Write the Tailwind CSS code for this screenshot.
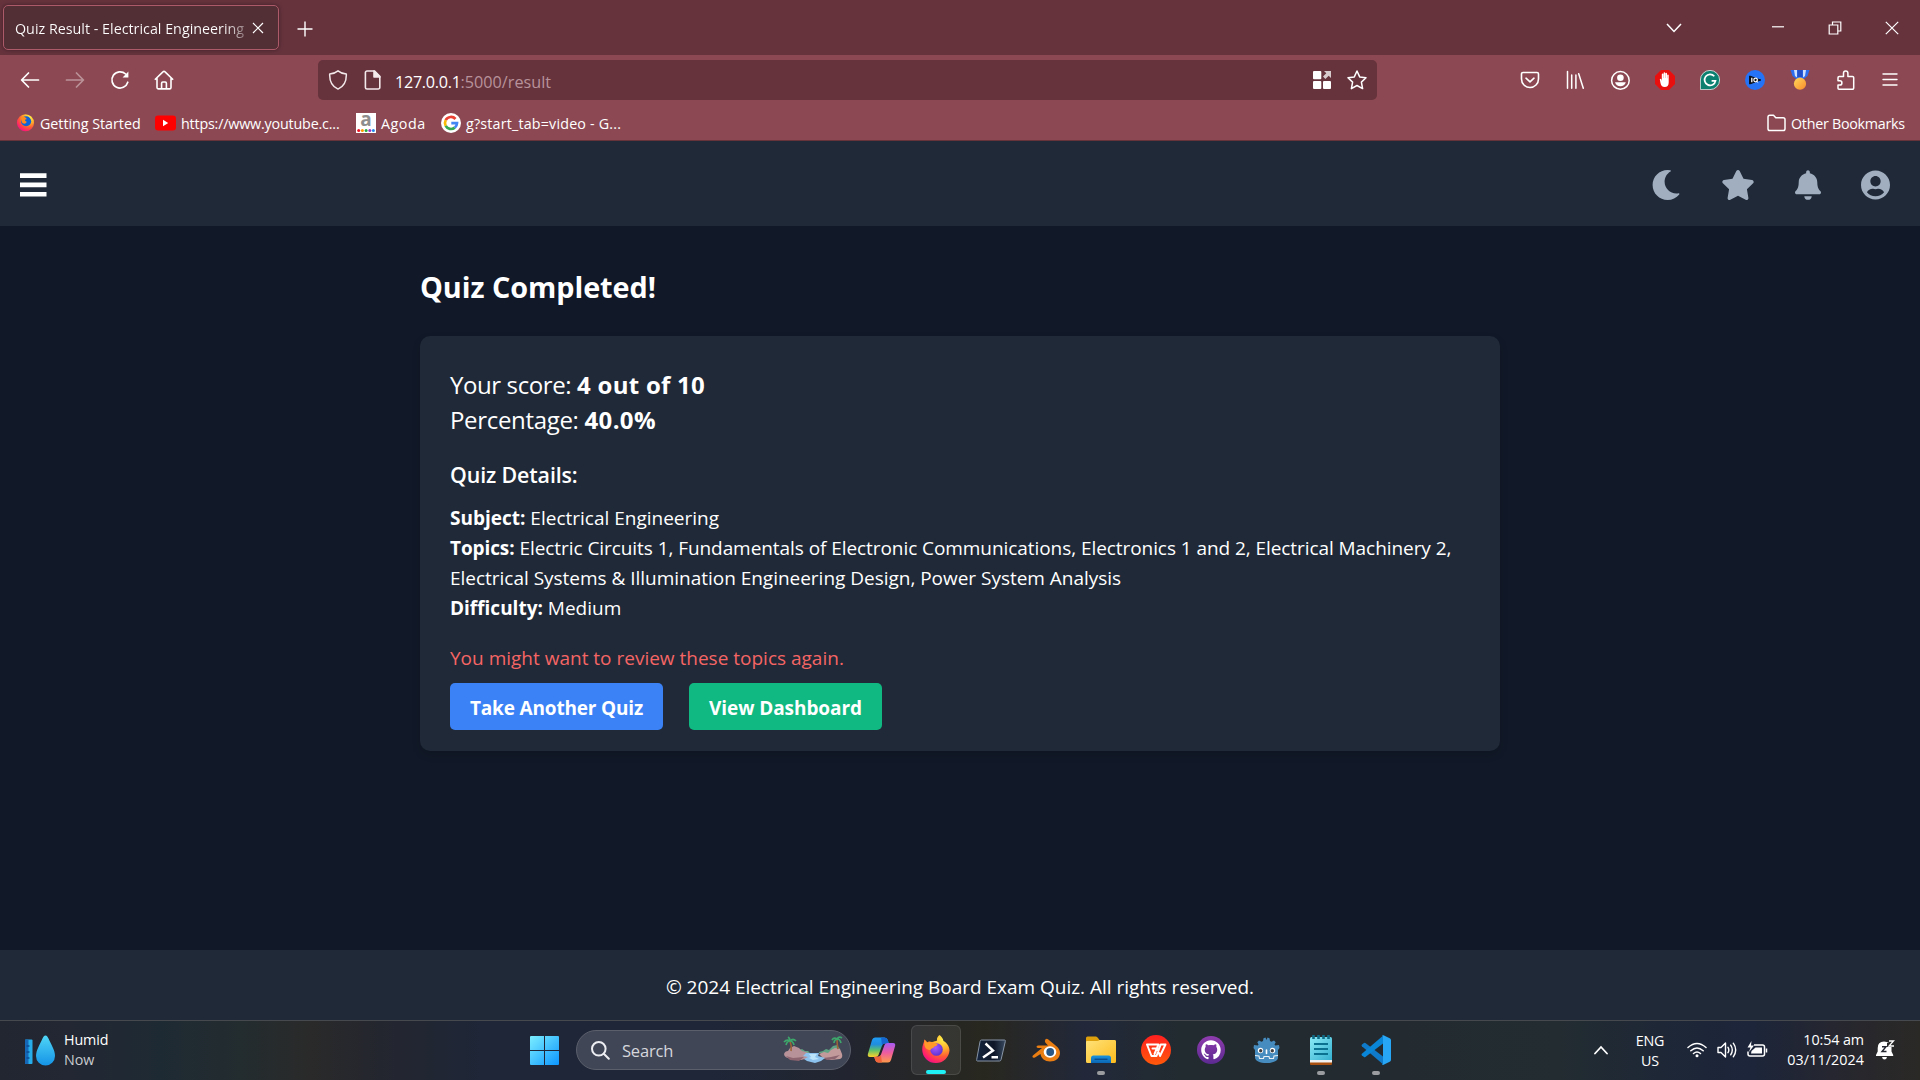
<!DOCTYPE html>
<html lang="en">
<head>
<meta charset="utf-8">
<title>Quiz Result - Electrical Engineering</title>
<script src="https://cdn.jsdelivr.net/npm/@tailwindcss/browser@4"></script>
</head>
<body class="flex h-[1080px] w-[1920px] flex-col overflow-hidden bg-[#111827] font-['Open_Sans','Noto_Sans',sans-serif] text-white">

<!-- Shared gradients and symbols -->
<svg class="absolute h-0 w-0" aria-hidden="true">
  <defs>
    <radialGradient id="fox" cx=".75" cy=".15" r="1"><stop offset="0" stop-color="#fff14a"/><stop offset=".35" stop-color="#ffb02b"/><stop offset=".62" stop-color="#ff5a36"/><stop offset=".85" stop-color="#ff1e6e"/><stop offset="1" stop-color="#d9128f"/></radialGradient>
    <radialGradient id="globe" cx=".4" cy=".35" r=".7"><stop offset="0" stop-color="#a45bff"/><stop offset="1" stop-color="#5b2fd0"/></radialGradient>
    <linearGradient id="win" x2="1" y2="1"><stop stop-color="#7ceeff"/><stop offset="1" stop-color="#0c96ff"/></linearGradient>
    <linearGradient id="drop" x2="0" y2="1"><stop stop-color="#4fd6f7"/><stop offset="1" stop-color="#1593e6"/></linearGradient>
    <linearGradient id="cpA" x2="0" y2="1"><stop stop-color="#1f9df5"/><stop offset=".35" stop-color="#1f8de0"/><stop offset=".65" stop-color="#5cc16b"/><stop offset="1" stop-color="#ffd32a"/></linearGradient>
    <linearGradient id="cpB" x2="0" y2="1"><stop stop-color="#a55bf5"/><stop offset=".5" stop-color="#ee5c9e"/><stop offset="1" stop-color="#ff9a4a"/></linearGradient>
    <linearGradient id="ps" x2="1" y2="0"><stop stop-color="#16263f"/><stop offset=".6" stop-color="#0e1728"/><stop offset="1" stop-color="#3a4a60"/></linearGradient>
    <linearGradient id="fold" x2="1" y2="1"><stop stop-color="#ffe27a"/><stop offset="1" stop-color="#fdbc1c"/></linearGradient>
    <linearGradient id="foldb" x2="0" y2="1"><stop stop-color="#1b93dd"/><stop offset="1" stop-color="#0b66b5"/></linearGradient>
    <linearGradient id="wps" x2="0" y2="1"><stop stop-color="#ff1f1f"/><stop offset="1" stop-color="#ff5a0a"/></linearGradient>
    <linearGradient id="note" x2="1" y2="1"><stop stop-color="#8beaf6"/><stop offset="1" stop-color="#35b0d0"/></linearGradient>
    <linearGradient id="medal" x2="1" y2="1"><stop stop-color="#ffd95a"/><stop offset="1" stop-color="#f98a2b"/></linearGradient>
    <linearGradient id="git" x2="0" y2="1"><stop stop-color="#8f3cae"/><stop offset="1" stop-color="#5c2a91"/></linearGradient>
  </defs>
</svg>

<!-- Tab strip -->
<div class="flex h-[55px] shrink-0 items-center bg-[#66333d] pl-[3px]">
  <div class="flex h-[45px] w-[276px] items-center rounded-[5px] border border-[#ac5a6a] bg-[#522e35] pl-[11px] shadow-[0_0_4px_rgba(0,0,0,0.4)]">
    <span class="w-[232px] bg-linear-to-r from-white from-90% to-white/30 bg-clip-text pt-[2px] text-[14.3px] whitespace-nowrap text-transparent">Quiz Result - Electrical Engineering</span>
    <svg class="ml-[5px] h-[12px] w-[12px]" viewBox="0 0 12 12" fill="none" stroke="#fff" stroke-width="1.2"><path d="M1 1l10 10M11 1L1 11"/></svg>
  </div>
  <svg class="mt-[2px] ml-[18px] h-[16px] w-[16px]" viewBox="0 0 16 16" fill="none" stroke="#fff" stroke-width="1.4"><path d="M8 0.5v15M0.5 8h15"/></svg>
  <div class="ml-auto flex items-center">
    <svg class="h-[16px] w-[16px]" viewBox="0 0 16 16" fill="none" stroke="#fff" stroke-width="1.5"><path d="M1 4l7 7.5L15 4"/></svg>
    <svg class="ml-[89px] h-[14px] w-[14px]" viewBox="0 0 14 14" stroke="#fff" stroke-width="1.2"><path d="M1 5.8h12"/></svg>
    <svg class="ml-[43px] h-[14px] w-[14px]" viewBox="0 0 14 14" fill="none" stroke="#fff" stroke-width="1.2"><path d="M1.2 4h8.6v9H1.2zM4.5 4V1h8.3v9H10"/></svg>
    <svg class="mr-[21px] ml-[43px] h-[14px] w-[14px]" viewBox="0 0 14 14" fill="none" stroke="#fff" stroke-width="1.2"><path d="M.8.8l12.4 12.4M13.2.8L.8 13.2"/></svg>
  </div>
</div>

<!-- Navigation toolbar -->
<div class="flex h-[50px] shrink-0 items-center bg-[#8c4953] text-white">
  <div class="flex w-[318px] items-center gap-[25px] pl-[20px]">
    <svg class="h-[20px] w-[20px]" viewBox="0 0 20 20" fill="none" stroke="#fff" stroke-width="1.7" stroke-linecap="round" stroke-linejoin="round"><path d="M18.5 10H1.8M8.5 3L1.6 10l6.900 7"/></svg>
    <svg class="h-[20px] w-[20px] opacity-40" viewBox="0 0 20 20" fill="none" stroke="#fff" stroke-width="1.7" stroke-linecap="round" stroke-linejoin="round"><path d="M1.500 10h16.700M11.500 3l6.900 7-6.900 7"/></svg>
    <svg class="h-[20px] w-[20px]" viewBox="0 0 20 20" fill="none" stroke="#fff" stroke-width="1.7" stroke-linecap="round"><path d="M17.800 12.200A8.100 8.100 0 1 1 15.600 4"/><path d="M18.400 1.600v5.800h-5.800z" fill="#fff" stroke="none"/></svg>
    <svg class="-ml-px h-[20px] w-[20px]" viewBox="0 0 20 20" fill="none" stroke="#fff" stroke-width="1.600" stroke-linejoin="round" stroke-linecap="round"><path d="M1.300 9.300L9.200 1.600a1.100 1.100 0 0 1 1.600 0l7.900 7.700M3 8.200v9.300a1.400 1.400 0 0 0 1.400 1.400h11.200a1.400 1.400 0 0 0 1.400-1.400V8.200M7.600 18.600v-5.400c0-.7.5-1.200 1.200-1.200h2.400c.7 0 1.200.5 1.200 1.200v5.400"/></svg>
  </div>
  <div class="flex h-[40px] w-[1059px] items-center rounded-[5px] bg-[#66333d] pr-[10px] pl-[10px]">
    <svg class="h-[20px] w-[20px]" viewBox="0 0 20 20" fill="none" stroke="#f3e8ea" stroke-width="1.500" stroke-linejoin="round"><path d="M10 .9c2.400 2 5 2.900 8.300 3.200.3 7.300-2.300 12.300-8.300 15C4 16.400 1.400 11.400 1.700 4.100 5 3.800 7.600 2.900 10 .9z"/></svg>
    <svg class="ml-[15px] h-[20px] w-[20px]" viewBox="0 0 20 20" fill="none" stroke="#f3e8ea" stroke-width="1.600" stroke-linejoin="round"><path d="M4 1h7.600l5.200 5.200v11.200A1.600 1.600 0 0 1 15.200 19H4a1.600 1.600 0 0 1-1.600-1.600V2.600A1.600 1.600 0 0 1 4 1z"/><path d="M11 1v6h6z" fill="#f3e8ea"/></svg>
    <span class="ml-[12px] pt-[4px] text-[16.200px] leading-[22px] text-[#b8929a]"><span class="tracking-[-0.3px] text-white">127.0.0.1</span>:5000/result</span>
    <svg class="ml-auto h-[20px] w-[20px]" viewBox="0 0 20 20" fill="#fff"><rect x="1" y="1" width="8.300" height="8.300" rx="1"/><rect x="1" y="11" width="8.300" height="8" rx="1"/><rect x="11" y="11" width="8" height="8" rx="1"/><path d="M12 1h7v7l-2.300-2.300-3.300 3.300-2.400-2.400L14.300 3.300z" opacity=".75"/></svg>
    <svg class="ml-[15px] h-[20px] w-[20px]" viewBox="0 0 20 20" fill="none" stroke="#fff" stroke-width="1.500" stroke-linejoin="round"><path d="M10 1l2.700 5.900 6.300.8-4.600 4.400 1.200 6.500L10 15.500l-5.600 3.100 1.200-6.500L1 7.700l6.300-.8z"/></svg>
  </div>
  <div class="ml-auto flex items-center gap-[25px] pr-[20px]">
    <svg class="h-[20px] w-[20px]" viewBox="0 0 20 20" fill="none" stroke="#fff" stroke-width="1.600" stroke-linecap="round" stroke-linejoin="round"><path d="M3 2.500h14a1.500 1.500 0 0 1 1.500 1.500v5a8.500 8.500 0 0 1-17 0V4A1.500 1.500 0 0 1 3 2.500z"/><path d="M6 8.200l4 3.700 4-3.700"/></svg>
    <svg class="h-[20px] w-[20px]" viewBox="0 0 20 20" fill="none" stroke="#fff" stroke-width="1.500" stroke-linecap="round"><path d="M2.500 1.500v16.700M6.700 5v13.200M10.900 5v13.200M13.700 3.800l4.600 14.400"/></svg>
    <svg class="h-[20px] w-[20px]" viewBox="0 0 20 20"><circle cx="10.400" cy="10.400" r="8.800" fill="none" stroke="#fff" stroke-width="1.500"/><circle cx="10.400" cy="7.700" r="3.300" fill="#fff"/><path d="M5 12.200h10.800c-.8 2.600-2.800 4-5.400 4s-4.600-1.400-5.400-4z" fill="#fff"/></svg>
    <svg class="h-[20px] w-[20px]" viewBox="0 0 20 20"><path d="M6 0h8l6 6v8l-6 6H6l-6-6V6z" fill="#e90f0f"/><path d="M4.800 9.300c0-.9 1.300-.9 1.500 0l.5 1.800V4.300c0-1 1.500-1 1.600 0V8h.2V3c0-1 1.600-1 1.600 0v5h.2V3.600c0-1 1.600-1 1.600 0v4.700h.2V5.200c0-1 1.500-1 1.500 0v7.300c0 3-1.500 4.500-4 4.500-2.600 0-3.700-1.600-4.200-4z" fill="#fff"/></svg>
    <svg class="h-[20px] w-[20px]" viewBox="0 0 20 20"><path d="M10 .4a9.600 9.600 0 1 1 0 19.200H.4V10A9.600 9.600 0 0 1 10 .4z" fill="#0b8070" stroke="#cfe3df" stroke-width=".9"/><path d="M14.300 6.300A5.500 5.500 0 1 0 15.500 10.800H11.600" fill="none" stroke="#fff" stroke-width="1.700"/></svg>
    <svg class="h-[20px] w-[20px]" viewBox="0 0 20 20"><circle cx="10" cy="10" r="10" fill="#2472f5"/><path d="M4.600 6l11.200 4-11.200 4z" fill="#0b1018" stroke="#0b1018"/><path d="M6.800 7.800v4.400" stroke="#fff" stroke-width="1.300"/><circle cx="10.600" cy="10" r="1.800" fill="none" stroke="#fff" stroke-width="1.200"/><path d="M11 10.800l2.200 1.700" stroke="#fff"/></svg>
    <svg class="h-[20px] w-[20px]" viewBox="0 0 20 20"><path d="M.5 0h19l-2 6-4.500 3.500H7L2.500 6z" fill="#2d6df0"/><path d="M4 0h3v7.500L5 6zM13 0h3l-1 6-2 1.500z" fill="#cfe0ff"/><path d="M7.500 0h5v7h-5z" fill="#2350c8"/><circle cx="10" cy="13.700" r="6.100" fill="url(#medal)"/></svg>
    <svg class="h-[20px] w-[20px]" viewBox="0 0 20 20" fill="none" stroke="#fff" stroke-width="1.500" stroke-linejoin="round"><path d="M4 19.200a1 1 0 0 1-1-1V15h1.800a2.100 2.100 0 0 0 0-4.200H3V7.700a1.200 1.200 0 0 1 1.200-1.200h4.300V3.200a2.200 2.200 0 0 1 4.400 0v3.300h4.600a1.200 1.200 0 0 1 1.200 1.200V18a1.200 1.200 0 0 1-1.200 1.200z"/></svg>
    <svg class="h-[20px] w-[20px]" viewBox="0 0 20 20" stroke="#fff" stroke-width="1.400" stroke-linecap="round"><path d="M3 4h14M3 9.500h14M3 15h14"/></svg>
  </div>
</div>

<!-- Bookmarks bar -->
<div class="flex h-[36px] shrink-0 items-center border-b border-[#66333b] bg-[#8c4953] pr-[15px] pl-[16px] text-[14.300px]">
  <svg class="h-[19px] w-[19px]" viewBox="0 0 30 30"><circle cx="15" cy="15.500" r="13.500" fill="url(#fox)"/><circle cx="16" cy="13" r="8" fill="#0f63d8"/><path d="M8 6c5-2 8 1 9 4-4 0-3 3 0 4-1 4-7 4-8 0-1-3-1-5-1-8z" fill="#ff8a1e"/></svg>
  <span class="ml-[5px] w-[100px] pt-[3px] tracking-[-0.030px] whitespace-nowrap">Getting Started</span>
  <svg class="ml-[15px] h-[16px] w-[21px]" viewBox="0 0 21 16"><rect width="21" height="15" y=".5" rx="3" fill="#f00"/><path d="M8 4.800v6.400L13.200 8z" fill="#fff"/></svg>
  <span class="ml-[5px] w-[159px] pt-[3px] tracking-[-0.18px] whitespace-nowrap">https://www.youtube.c...</span>
  <svg class="ml-[16px] h-[20px] w-[20px]" viewBox="0 0 20 20"><rect width="20" height="20" fill="#fff"/><text x="10" y="13" text-anchor="middle" font-family="Open Sans" font-weight="700" font-size="19" fill="#8e8e8e">a</text><circle cx="2.700" cy="17.400" r="1.500" fill="#e12"/><circle cx="6.400" cy="17.400" r="1.500" fill="#f90"/><circle cx="10.100" cy="17.400" r="1.500" fill="#2a4"/><circle cx="13.800" cy="17.400" r="1.500" fill="#93c"/><circle cx="17.400" cy="17.400" r="1.500" fill="#28e"/></svg>
  <span class="ml-[5px] w-[45px] pt-[3px] tracking-[0.5px] whitespace-nowrap">Agoda</span>
  <svg class="ml-[15px] h-[20px] w-[20px]" viewBox="0 0 20 20" fill="none" stroke-width="2.700"><circle cx="10" cy="10" r="10" fill="#fff"/><path d="M14.500 6A6 6 0 0 0 4.700 7.200" stroke="#ea4335"/><path d="M4.700 7.200a6 6 0 0 0 0 5.600" stroke="#fbbc05"/><path d="M4.700 12.800A6 6 0 0 0 13.800 14.600" stroke="#34a853"/><path d="M13.800 14.600A6 6 0 0 0 16 10.200H10.300" stroke="#4285f4"/></svg>
  <span class="ml-[5px] pt-[3px] tracking-[0.18px] whitespace-nowrap">g?start_tab=video - G...</span>
  <svg class="ml-auto h-[18px] w-[19px]" viewBox="0 0 19 18" fill="none" stroke="#fff" stroke-width="1.500" stroke-linejoin="round"><path d="M1 3a1.800 1.800 0 0 1 1.800-1.800h3.700l2.300 2.600h7.400A1.800 1.800 0 0 1 18 5.600v9.200a1.800 1.800 0 0 1-1.800 1.800H2.800A1.800 1.800 0 0 1 1 14.800z"/></svg>
  <span class="ml-[5px] w-[114px] pt-[3px] tracking-[-0.27px] whitespace-nowrap">Other Bookmarks</span>
</div>

<!-- Site header -->
<header class="flex h-[85px] shrink-0 items-center justify-between bg-[#1f2937] pt-[2px] pr-[30px] pl-5 text-[#a0aec0]">
  <svg class="h-[30px] w-[27px]" viewBox="0 0 27 30" fill="#fff"><path d="M0 3.200h26.500v4.700H0zM0 12.500h26.500v4.700H0zM0 21.900h26.500v4.700H0z"/></svg>
  <div class="flex items-center">
    <svg class="h-[30px] w-[30px]" viewBox="0 0 512 512" fill="currentColor"><path d="M283.211 512c78.962 0 151.079-35.925 198.857-94.792 7.068-8.708-.639-21.430-11.562-19.350-124.203 23.654-238.262-71.576-238.262-196.960 0-72.222 38.662-138.635 101.498-174.394 9.686-5.512 7.250-20.197-3.756-22.230A258.156 258.156 0 0 0 283.211 0c-141.309 0-256 114.511-256 256 0 141.309 114.511 256 256 256z"/></svg>
    <svg class="ml-[40px] h-[30px] w-[34px]" viewBox="0 0 576 512" fill="currentColor"><path d="M259.300 17.800L194 150.200 47.900 171.500c-26.200 3.800-36.700 36.100-17.700 54.600l105.700 103-25 145.500c-4.500 26.300 23.200 46 46.400 33.700L288 439.600l130.700 68.700c23.200 12.200 50.900-7.400 46.400-33.700l-25-145.500 105.700-103c19-18.500 8.500-50.800-17.700-54.600L382 150.200 316.700 17.800c-11.700-23.600-45.600-23.900-57.400 0z"/></svg>
    <svg class="ml-[40px] h-[30px] w-[26px]" viewBox="0 0 448 512" fill="currentColor"><path d="M224 512c35.320 0 63.970-28.650 63.970-64H160.030c0 35.350 28.650 64 63.970 64zm215.390-149.710c-19.320-20.760-55.470-51.990-55.470-154.290 0-77.700-54.480-139.900-127.940-155.160V32c0-17.670-14.320-32-31.980-32s-31.980 14.330-31.980 32v20.840C118.560 68.100 64.080 130.300 64.080 208c0 102.300-36.150 133.530-55.470 154.290-6 6.450-8.660 14.160-8.610 21.710.11 16.400 12.980 32 32.100 32h383.800c19.120 0 32-15.600 32.100-32 .05-7.550-2.610-15.270-8.610-21.710z"/></svg>
    <svg class="ml-[40px] h-[30px] w-[29px]" viewBox="0 0 496 512" fill="currentColor"><path d="M248 8C111 8 0 119 0 256s111 248 248 248 248-111 248-248S385 8 248 8zm0 96c48.600 0 88 39.400 88 88s-39.400 88-88 88-88-39.400-88-88 39.400-88 88-88zm0 344c-58.700 0-111.300-26.600-146.500-68.200 18.800-35.400 55.600-59.800 98.500-59.800 2.400 0 4.800.4 7.100 1.100 13 4.200 26.600 6.900 40.900 6.900 14.300 0 28-2.700 40.900-6.900 2.300-.7 4.700-1.100 7.100-1.100 42.900 0 79.700 24.400 98.500 59.800C359.300 421.400 306.700 448 248 448z"/></svg>
  </div>
</header>

<!-- Result -->
<main class="mx-auto w-[1080px] grow pt-[40px]">
  <h1 class="h-[70px] pt-px text-[28.800px] leading-[40px] font-bold tracking-[-0.050px]">Quiz Completed!</h1>
  <section class="h-[415px] rounded-[10px] bg-[#1f2937] p-[30px] text-[19px] leading-[30px] shadow-[0_4px_8px_rgba(0,0,0,0.12)]">
    <div class="pt-px text-[24px] leading-[35px]">
      <p><span class="tracking-[-0.400px]">Your score: </span><b class="tracking-[0.270px]">4 out of 10</b></p>
      <p><span class="tracking-[-0.320px]">Percentage: </span><b class="tracking-[0.350px]">40.0%</b></p>
    </div>
    <h2 class="mt-[20px] text-[21.400px] leading-[35px] font-semibold tracking-[-0.130px]">Quiz Details:</h2>
    <div class="mt-[11px]">
      <p><b>Subject:</b> Electrical Engineering</p>
      <p><b class="tracking-[-0.100px]">Topics:</b> <span class="tracking-[-0.065px]">Electric Circuits 1, Fundamentals of Electronic Communications, Electronics 1 and 2, Electrical Machinery 2,</span><br><span class="tracking-[-0.020px]">Electrical Systems &amp; Illumination Engineering Design, Power System Analysis</span></p>
      <p><b>Difficulty:</b> Medium</p>
    </div>
    <p class="mt-[20px] text-[#f56565]">You might want to review these topics again.</p>
    <div class="mt-[10px] flex gap-[26px] font-bold">
      <a class="flex h-[47px] w-[213px] items-center justify-center rounded-[5px] bg-[#3b82f6] pt-[3px] tracking-[-0.170px]">Take Another Quiz</a>
      <a class="flex h-[47px] w-[193px] items-center justify-center rounded-[5px] bg-[#10b981] pt-[3px] tracking-[-0.070px]">View Dashboard</a>
    </div>
  </section>
</main>

<footer class="flex h-[70px] shrink-0 items-center justify-center bg-[#1f2937] pt-[5px] text-[19px] tracking-[-0.020px]">© 2024 Electrical Engineering Board Exam Quiz. All rights reserved.</footer>

<!-- Taskbar -->
<div class="flex h-[60px] shrink-0 items-center border-t border-[#46494d] bg-[linear-gradient(90deg,#222631_0px,#222733_70px,#1e2a33_160px,#232c2f_240px,#2a2a2a_310px,#24262f_380px,#1e2637_480px,#1e2638_700px,#22252f_850px,#28271f_985px,#22283a_1085px,#222b30_1180px,#232b30_1400px,#222c31_1560px,#1e2736_1660px,#1c253a_1750px,#252630_1830px,#2b2926_1920px)] pb-px">
  <div class="flex w-[576px] items-center pl-[24px]">
    <svg class="h-[32px] w-[32px]" viewBox="0 0 32 32"><rect x="1" y="5.500" width="7.500" height="24.500" rx="1" fill="#27aeea"/><path d="M1 5.500h3.500v24.500H1z" fill="#1667b5"/><path d="M2.500 12h3M2.500 18h3M2.500 24h3" stroke="#0d4e96" stroke-width="1.500"/><path d="M21.500 1.500c1.500 0 2.300 1.500 3 3 3 6.500 6.500 12 6.500 17.500a9.500 9.500 0 0 1-19 0c0-5.500 3.500-11 6.500-17.500.7-1.500 1.500-3 3-3z" fill="url(#drop)"/></svg>
    <div class="ml-[8px] w-[100px] pb-px text-[14.300px] leading-[20px]">
      <div class="tracking-[-0.100px]">Humid</div>
      <div class="text-[#c9cbcf]">Now</div>
    </div>
    <svg class="ml-auto mr-[17px] h-[29px] w-[29px]" viewBox="0 0 29 29" fill="url(#win)"><path d="M1 0h13v14H0V1a1 1 0 0 1 1-1zM15 0h13a1 1 0 0 1 1 1v13H15zM0 15h14v14H1a1 1 0 0 1-1-1zM15 15h14v13a1 1 0 0 1-1 1H15z"/></svg>
  </div>
  <div class="flex h-[40px] w-[275px] items-center rounded-full border border-[#5b5f6c] bg-[#414656] pr-[7px] pl-[14px]">
    <svg class="h-[19px] w-[19px]" viewBox="0 0 19 19" fill="none" stroke="#eceef2" stroke-width="2" stroke-linecap="round"><circle cx="7.800" cy="7.800" r="6.800"/><path d="M12.800 12.800l5 5"/></svg>
    <span class="ml-[12px] pt-[2px] text-[16.500px] tracking-[-0.200px] text-[#d5d7dc]">Search</span>
    <svg class="ml-auto h-[28px] w-[60px]" viewBox="0 0 60 28"><path d="M12 15l2-3 2 2 3-1 3 2h3l3 3H12zM36 16l4-1 3-2 3 1 4-4 4-1 3 4v4H36z" fill="#5fa384"/><path d="M1 18q1-3 4-3l2-3 4-2 5 2 3 3 4 1 5 2-2 4-8 2-9-1q-8-1-8-5z" fill="#b79299"/><path d="M36 18l5-2 4 1 3-3 4-2 5 1 2 5q1 4-2 5l-9 1-8-2z" fill="#c39a9c"/><path d="M3 20l7 2 11-1-5 4-9-1zM40 22l8-1 9-2-5 4-8 1z" fill="#8d6570"/><path d="M23 17h13l-1 3 7 2-4 3-6 2-8-2-3-2 4-2-5-1z" fill="#8cc3ee"/><path d="M26 18h8l-2 3 4 2-6 1-4-2 2-1z" fill="#bce4fb"/><path d="M7 5q2 5 1 10M54 3q0 5 1 10" stroke="#9c6337" stroke-width="1.600" fill="none"/><path d="M7 5q-3-2-6 1M7 5q3-3 6 0M7 5q-3 0-4 4M7 5q3 0 4 4M7 5q0-3-2-4M54 3q-3-2-5 1M54 3q2-3 5-1M54 3q-3 1-3 4M54 3q3 0 4 4" stroke="#3da66b" stroke-width="1.700" fill="none"/></svg>
  </div>
  <div class="ml-[5px] flex gap-[5px]">
    <div class="flex h-[50px] w-[50px] items-center justify-center"><svg class="h-[28px] w-[29px]" viewBox="0 0 29 28"><path d="M8 1.500h9.500q2.500 0 3.300 2.500l1 3.500h-4q-2 0-2.700 2L11.500 19q-.8 2-3 2H3Q.2 21 .9 18L5 4q.8-2.500 3-2.500z" fill="url(#cpA)"/><path d="M14 1.500h3.500q2.500 0 3.300 2.500l1 3.500h-4q-2 0-2.700 2z" fill="#1566cf"/><path d="M21 26.500h-9.500Q9 26.500 8.200 24l-1-3.300h4q2 0 2.700-2L17.500 9q.8-2 3-2H26q2.800 0 2.100 3L24 24q-.8 2.500-3 2.500z" fill="url(#cpB)"/><path d="M15 26.500h-3.500Q9 26.500 8.200 24l-1-3.300h4q2 0 2.700-2z" fill="#f0643c"/></svg></div>
    <div class="relative flex h-[50px] w-[50px] items-center justify-center rounded-[6px] border border-white/10 bg-white/7"><svg class="mb-[2px] h-[30px] w-[30px]" viewBox="0 0 30 30"><path d="M18.500 1c1.500 1 3.800 3.800 4 6 2.500 1 6 5 6 9.500A13.500 13.500 0 0 1 15 29 13.500 13.500 0 0 1 1.200 15.500C1.200 11 3 8.500 3.500 5.500 5 7 5.500 7.500 6 8.500 8 7 9 7.500 11 8c1.500-.5 4-1 5-1.500C15.500 4 17 2 18.500 1z" fill="url(#fox)"/><circle cx="15.500" cy="15.500" r="6.300" fill="url(#globe)"/><path d="M3.500 5.500C5 7 5.500 7.500 6 8.500 8.500 7.500 11 8 12.500 9c2 0 4 .5 4 1.500-.5 1.500-3 1.500-3.700 2.500 0 1.500-2.800 1-3.300 3C6 16 2 14 3.500 5.500z" fill="#ff9a2a"/></svg><i class="absolute bottom-0 h-[4px] w-[20px] rounded-full bg-[#1ff0f5]"></i></div>
    <div class="flex h-[50px] w-[50px] items-center justify-center"><svg class="h-[23px] w-[30px]" viewBox="0 0 30 23"><path d="M5.500 1h23q1.200 0 .8 1.500l-4.200 18q-.4 1.500-1.600 1.500H1.500Q.3 22 .7 20.500L4 2.500Q4.300 1 5.500 1z" fill="url(#ps)" stroke="#8895a6"/><path d="M9.500 4.500l7.500 7-10 7M15.500 18.300h6.500" stroke="#fff" stroke-width="2.400" fill="none"/></svg></div>
    <div class="flex h-[50px] w-[50px] items-center justify-center"><svg class="h-[24px] w-[28px]" viewBox="0 0 28 24"><path d="M13.500 1.300q1.200-1.200 2.500 0l8.500 7q3.500 3 3.500 6.700c0 5-4.500 8.500-10 8.500-5 0-9-3-9.500-7.500l-5.500 3.500q-2 .8-2.500-.5-.3-1 .7-1.800L10 10H6q-1.500-.2-1.500-1.300T6 7.400H16L13.300 4.500q-1-1.500.2-3.200z" fill="#ea7e12"/><ellipse cx="18" cy="14" rx="6.300" ry="5.700" fill="#fff"/><circle cx="18.200" cy="14" r="3.900" fill="#265787"/></svg></div>
    <div class="relative flex h-[50px] w-[50px] items-center justify-center"><svg class="h-[28px] w-[30px]" viewBox="0 0 30 28"><path d="M0 2q0-1.500 1.500-1.500H10q1 0 2 1.500l1.500 2H28q2 0 2 2v6H0z" fill="#dda00c"/><path d="M0 6q0-1 1-1h10q1.500 0 2.500-1H28.500Q30 4 30 5.500v20Q30 27 28.500 27h-27Q0 27 0 25.500z" fill="url(#fold)"/><path d="M5 27v-5q0-2.500 2.500-2.500h15Q25 19.500 25 22v5z" fill="url(#foldb)"/><path d="M8.500 23.300h13" stroke="#0a4d8f" stroke-width="1.400"/></svg><i class="absolute bottom-0 h-[4px] w-[8px] rounded-full bg-[#9a9ca0]"></i></div>
    <div class="flex h-[50px] w-[50px] items-center justify-center"><svg class="h-[30px] w-[30px]" viewBox="0 0 30 30"><circle cx="15" cy="15" r="15" fill="url(#wps)"/><path d="M11.500 13.500h4.800l2.700 7.500 5.500-11.500h-4.800L15.500 21h-5L6 9.500h11.500L13.500 19" fill="none" stroke="#fff" stroke-width="2" stroke-linejoin="round" stroke-linecap="round"/></svg></div>
    <div class="flex h-[50px] w-[50px] items-center justify-center"><svg class="h-[28px] w-[28px]" viewBox="0 0 28 28"><circle cx="14" cy="14" r="14" fill="url(#git)"/><g transform="translate(4.200 4.200) scale(1.220)"><path fill="#fff" d="M8 0C3.580 0 0 3.580 0 8c0 3.540 2.290 6.530 5.470 7.590.4.070.55-.17.55-.38 0-.19-.01-.82-.01-1.490-2.010.37-2.530-.49-2.690-.94-.09-.23-.48-.94-.82-1.130-.28-.15-.68-.52-.01-.53.63-.01 1.080.58 1.230.82.72 1.210 1.870.87 2.330.66.070-.52.280-.87.510-1.070-1.780-.2-3.640-.89-3.640-3.950 0-.87.310-1.590.82-2.150-.08-.2-.36-1.020.08-2.120 0 0 .67-.21 2.200.82.64-.18 1.320-.27 2-.27s1.360.09 2 .27c1.530-1.040 2.200-.82 2.200-.82.44 1.100.16 1.920.08 2.120.51.560.82 1.270.82 2.150 0 3.070-1.870 3.750-3.650 3.950.29.250.54.730.54 1.480 0 1.070-.01 1.930-.01 2.200 0 .21.150.46.550.38A8.010 8.010 0 0 0 16 8c0-4.420-3.580-8-8-8z"/></g></svg></div>
    <div class="flex h-[50px] w-[50px] items-center justify-center"><svg class="h-[27px] w-[27px]" viewBox="0 0 27 27"><path d="M10.500 1.200l2-.7 1 2.500 1-2.500 2 .7.5 2.800 1.500.7L21 3.500l1.700 1.700L21.500 7.500l.7 1 3.800-.5.500 3-1.500 2v7.500c0 3.500-5 5.500-11.500 5.500S2 24 2 20.500V13L.5 11 1 8l3.800.5.700-1-1.200-2.300L6 3.500l2.500 1.200L10 4z" fill="#478cbf"/><path d="M2 18.500l4 .5.500 2.500h4L11 19.500h5l.5 2h4L21 19l4-.5" stroke="#e8f0f6" stroke-width="1.100" fill="none"/><circle cx="7.500" cy="13.500" r="2.700" fill="#fff"/><circle cx="19.500" cy="13.500" r="2.700" fill="#fff"/><circle cx="7.700" cy="13.700" r="1.700" fill="#414042"/><circle cx="19.300" cy="13.700" r="1.700" fill="#414042"/><path d="M13.500 13v3.500" stroke="#fff" stroke-width="1.600" stroke-linecap="round"/></svg></div>
    <div class="relative flex h-[50px] w-[50px] items-center justify-center"><svg class="h-[30px] w-[22px]" viewBox="0 0 22 30"><path d="M0 26h22v3q0 1-1 1H1q-1 0-1-1z" fill="#a8500f"/><path d="M0 24h22v3.500H0z" fill="#f1f1f1"/><path d="M0 3.500Q0 2 1.500 2h19Q22 2 22 3.500V25H0z" fill="url(#note)"/><path d="M3.500 0v4M8.500 0v4M13.500 0v4M18.500 0v4" stroke="#0f6b85" stroke-width="2.600"/><path d="M4 9h14M4 14h14M4 19h14" stroke="#0b7190" stroke-width="1.800"/></svg><i class="absolute bottom-0 h-[4px] w-[8px] rounded-full bg-[#9a9ca0]"></i></div>
    <div class="relative flex h-[50px] w-[50px] items-center justify-center"><svg class="h-[30px] w-[30px]" viewBox="0 0 30 30"><path d="M1 9.500l2-1.500q.7-.4 1.400.1L22 21.500v7.800L.9 11.300q-.9-1 .1-1.800z" fill="#0f7ac9"/><path d="M1 20.500l2 1.500q.7.400 1.400-.1L22 8.500V.7L.9 18.700q-.9 1 .1 1.800z" fill="#0a86d8"/><path d="M21 29.600q.7.500 1.500.1l6.200-3q1.300-.6 1.300-2V5.300q0-1.400-1.300-2l-6.200-3Q21.700 0 21 .4q1 .3 1 1.300v26.600q0 1-1 1.300z" fill="#27a6f5"/></svg><i class="absolute bottom-0 h-[4px] w-[8px] rounded-full bg-[#9a9ca0]"></i></div>
  </div>
  <div class="ml-auto flex items-center pr-[25px] text-[14.300px] leading-[20px]">
    <svg class="h-[14px] w-[14px]" viewBox="0 0 14 14" fill="none" stroke="#fff" stroke-width="1.800" stroke-linecap="round"><path d="M1 10.500l6-6.500 6 6.500"/></svg>
    <div class="ml-[27px] w-[30px] pt-px text-center tracking-[-0.200px]"><div>ENG</div><div>US</div></div>
    <svg class="ml-[22px] h-[20px] w-[20px]" viewBox="0 0 20 20" fill="none" stroke="#fff" stroke-width="1.500" stroke-linecap="round"><path d="M1 7.500q9-8 18 0M3.800 10.700q6.200-5.500 12.400 0M6.500 13.500q3.500-3 7 0"/><circle cx="10" cy="15.800" r="1.500" fill="#fff" stroke="none"/></svg>
    <svg class="ml-[10px] h-[20px] w-[20px]" viewBox="0 0 20 20" fill="none" stroke="#fff" stroke-width="1.400" stroke-linecap="round" stroke-linejoin="round"><path d="M1 7.500h3L8.500 3v14L4 12.500H1z"/><path d="M11 7.300q1.700 2.700 0 5.400M13.700 5.200q3.200 4.800 0 9.600M16.300 3.200q4.800 6.800 0 13.600"/></svg>
    <svg class="ml-[9px] h-[20px] w-[22px]" viewBox="0 0 22 20" fill="none" stroke="#fff" stroke-width="1.500" stroke-linejoin="round"><path d="M8 5h8.500A2 2 0 0 1 18.500 7v7a2 2 0 0 1-2 2H4a2 2 0 0 1-2-2v-2.500"/><path d="M9.500 7.500H16v6H5l.5-2.500z" fill="#fff" stroke="none"/><path d="M20.500 8.500v4"/><path d="M5.500 1L1.500 7.500h3L3 12l5-6.500H5z" fill="#fff" stroke="none"/></svg>
    <div class="ml-[14px] w-[82px] pb-px text-right"><div class="tracking-[-0.080px]">10:54 am</div><div class="tracking-[0.080px]">03/11/2024</div></div>
    <svg class="ml-[12px] h-[20px] w-[19px]" viewBox="0 0 19 20"><path d="M8 1.500q3 0 5 1.500h-2v4h4.500v4.500l1.700 3.500v1H0v-1l1.700-3.500V8Q1.700 1.500 8 1.500z" fill="#fff"/><path d="M6 17h5q-.5 2.500-2.500 2.500T6 17z" fill="#fff"/><path d="M6 6.800h4l-4 4.700h4.500" stroke="#242630" stroke-width="1.400" fill="none"/><path d="M13 1h4.500L13 6h5" stroke="#fff" stroke-width="1.300" fill="none"/></svg>
  </div>
</div>
</body>
</html>
